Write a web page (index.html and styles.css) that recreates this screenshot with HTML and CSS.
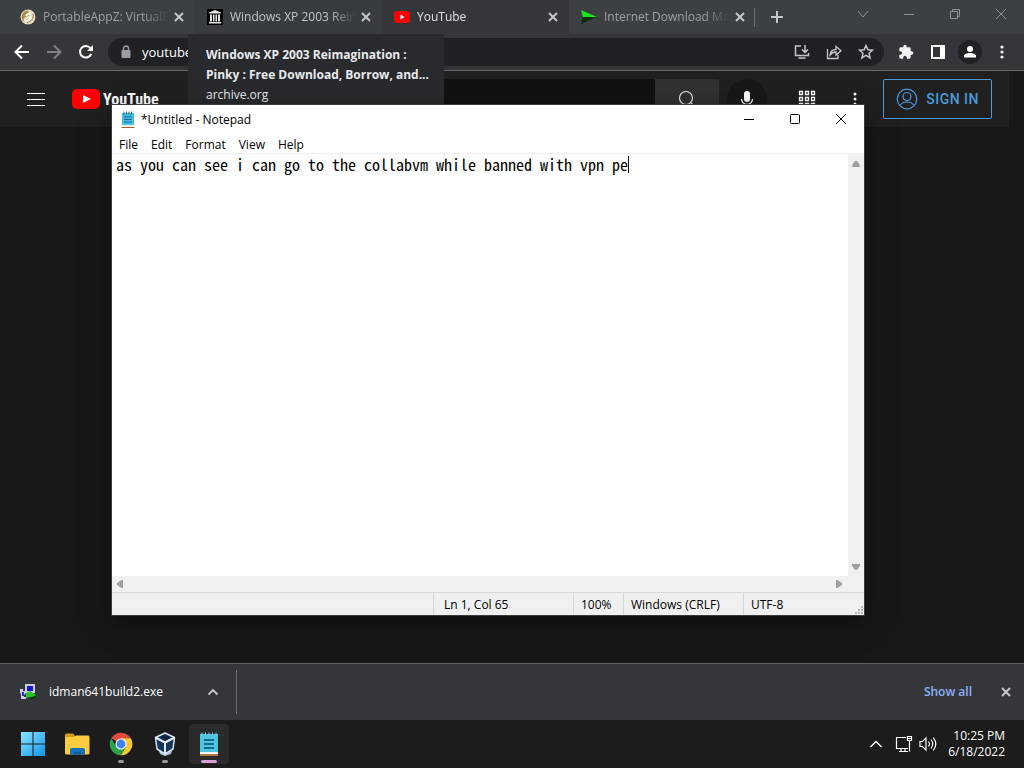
FILE: index.html
```html
<!DOCTYPE html>
<html lang="en">
<head>
    <meta charset="UTF-8">
    <meta name="viewport" content="width=device-width, initial-scale=1.0">
    <title>Desktop</title>
    <link rel="stylesheet" href="styles.css">
</head>
<body>
    <div class="browser">
        <div class="tab-strip">
            <div class="tab">
                <svg class="favicon" width="16" height="16" viewBox="0 0 16 16">
                    <circle cx="8" cy="8" r="7.5" fill="#e9dfc0"/>
                    <path d="M8 1.500a6.500 6.500 0 0 0-4 11.500c-1-4 1-5 3-5.500s3-2 1-6z" fill="#a98a4c"/>
                    <path d="M5 12c3 .5 5-1 5.500-4.500M6 7c1-2 3-3 5-2" stroke="#fff" stroke-width="2" fill="none"/>
                    <path d="M13 5c1 4-2 8-6 8.500" stroke="#8c7340" fill="none"/>
                </svg>
                <span class="tab-title">PortableAppZ: VirtualB</span>
                <button class="tab-close" aria-label="Close tab"><svg width="10" height="10" viewBox="0 0 10 10"><path d="M1 1l8 8M9 1l-8 8"/></svg></button>
            </div>
            <div class="tab hovered">
                <svg class="favicon" width="16" height="16" viewBox="0 0 16 16">
                    <rect width="16" height="16" fill="#000"/>
                    <path d="M8 1l6 2.500v1H2v-1zM3 5.500h2v7H3zM6 5.500h1.500v7H6zM8.500 5.500H10v7H8.500zM11 5.500h2v7h-2zM2 13h12v1.500H2z" fill="#e4e4e4"/>
                </svg>
                <span class="tab-title">Windows XP 2003 Rein</span>
                <button class="tab-close" aria-label="Close tab"><svg width="10" height="10" viewBox="0 0 10 10"><path d="M1 1l8 8M9 1l-8 8"/></svg></button>
            </div>
            <div class="tab active">
                <svg class="favicon" width="16" height="16" viewBox="0 0 16 16">
                    <rect y="2" width="16" height="12" rx="3" fill="#f00"/>
                    <path d="M6.500 5.500v5l4-2.500z" fill="#fff"/>
                </svg>
                <span class="tab-title">YouTube</span>
                <button class="tab-close" aria-label="Close tab"><svg width="10" height="10" viewBox="0 0 10 10"><path d="M1 1l8 8M9 1l-8 8"/></svg></button>
            </div>
            <div class="tab">
                <svg class="favicon" width="16" height="16" viewBox="0 0 16 16">
                    <path d="M0 1l16 7H2z" fill="#1be51b"/>
                    <path d="M2 8h14L0 15z" fill="#062d06"/>
                </svg>
                <span class="tab-title">Internet Download Ma</span>
                <button class="tab-close" aria-label="Close tab"><svg width="10" height="10" viewBox="0 0 10 10"><path d="M1 1l8 8M9 1l-8 8"/></svg></button>
            </div>
            <button class="new-tab" aria-label="New tab"><svg width="12" height="12" viewBox="0 0 12 12"><path d="M6 0v12M0 6h12" stroke="#c4c7ca" stroke-width="2"/></svg></button>
            <div class="window-buttons">
                <button aria-label="Search tabs"><svg width="12" height="12" viewBox="0 0 12 12"><path d="M1 3l5 6 5-6"/></svg></button>
                <button aria-label="Minimize"><svg width="12" height="12" viewBox="0 0 12 12"><path d="M1 6.500h10"/></svg></button>
                <button aria-label="Restore"><svg width="12" height="12" viewBox="0 0 12 12"><path d="M1.500 3.500h7v7h-7zM3.500 3.500v-2h7v7h-2"/></svg></button>
                <button aria-label="Close"><svg width="12" height="12" viewBox="0 0 12 12"><path d="M1 1l10 10M11 1L1 11"/></svg></button>
            </div>
        </div>

        <div class="toolbar">
            <button aria-label="Back"><svg width="16" height="16" viewBox="0 0 16 16"><path d="M15 8H2M8 1.500L1.500 8 8 14.500" fill="none" stroke="#fff" stroke-width="2"/></svg></button>
            <button aria-label="Forward"><svg width="16" height="16" viewBox="0 0 16 16"><path d="M1 8h13M8 1.500L14.500 8 8 14.500" fill="none" stroke="#7f8184" stroke-width="2"/></svg></button>
            <button aria-label="Reload"><svg width="16" height="16" viewBox="0 0 16 16"><path d="M13.200 10a5.800 5.800 0 1 1-.8-5.800" fill="none" stroke="#fff" stroke-width="2"/><path d="M15 1v6H9z" fill="#fff"/></svg></button>
            <div class="address-bar">
                <svg width="12" height="14" viewBox="0 0 12 14"><rect x="1.500" y="5" width="9" height="8" rx="1" fill="#9b9da0"/><path d="M3.500 5V3.500a2.500 2.500 0 0 1 5 0V5" fill="none" stroke="#9b9da0" stroke-width="1.500"/></svg>
                <input type="text" value="youtube.com" aria-label="Address">
                <button aria-label="Install"><svg width="16" height="16" viewBox="0 0 16 16" fill="none" stroke="#c4c7ca" stroke-width="1.500"><path d="M7 2H1.500v9.500h13V9M4.500 14h7M11 1v7M8 5.500l3 3 3-3"/></svg></button>
                <button aria-label="Share"><svg width="16" height="16" viewBox="0 0 16 16" fill="none" stroke="#c4c7ca" stroke-width="1.300"><path d="M1.500 5v9.500H12V11M4 11c.5-4 3-5.500 6-5.500V2.500l5 4.300-5 4.200V8C7.500 8 5.500 9 4 11z"/></svg></button>
                <button aria-label="Bookmark"><svg width="16" height="16" viewBox="0 0 16 16" fill="none" stroke="#c4c7ca" stroke-width="1.500"><path d="M8 1.500l1.900 4.300 4.600.4-3.500 3.100 1.100 4.600L8 11.400l-4.100 2.500L5 9.300 1.500 6.200l4.600-.4z"/></svg></button>
            </div>
            <button aria-label="Extensions"><svg width="16" height="16" viewBox="0 0 24 24"><path d="M20.500 11H19V7a2 2 0 0 0-2-2h-4V3.500a2.500 2.500 0 0 0-5 0V5H4a2 2 0 0 0-2 2v3.800h1.500a2.700 2.700 0 0 1 0 5.400H2V20a2 2 0 0 0 2 2h3.800v-1.500a2.700 2.700 0 0 1 5.400 0V22H17a2 2 0 0 0 2-2v-4h1.500a2.500 2.500 0 0 0 0-5z" fill="#f1f3f4"/></svg></button>
            <button aria-label="Side panel"><svg width="16" height="16" viewBox="0 0 16 16"><path d="M1 1h14v14H1zM3 3v10h7V3z" fill="#fff" fill-rule="evenodd"/></svg></button>
            <button class="profile" aria-label="Profile"><svg width="14" height="14" viewBox="0 0 14 14" fill="#fff"><circle cx="7" cy="4" r="3"/><path d="M1 12.500V11c0-2 3-3 6-3s6 1 6 3v1.500z"/></svg></button>
            <button aria-label="Menu"><svg width="4" height="16" viewBox="0 0 4 16" fill="#f1f3f4"><circle cx="2" cy="3" r="1.600"/><circle cx="2" cy="8" r="1.600"/><circle cx="2" cy="13" r="1.600"/></svg></button>
        </div>

        <div class="page">
            <div class="yt-header">
                <button class="yt-guide" aria-label="Guide"><svg width="18" height="14" viewBox="0 0 18 14"><path d="M0 1.500h18M0 7.500h18M0 13.500h18" stroke="#fff"/></svg></button>
                <a class="yt-logo" href="#">
                    <svg width="28" height="20" viewBox="0 0 28 20"><rect width="28" height="20" rx="5" fill="#f00"/><path d="M11 6v8l8-4z" fill="#fff"/></svg>
                    <span>YouTube</span>
                </a>
                <div class="yt-search">
                    <input type="text" aria-label="Search">
                    <button aria-label="Search"><svg width="20" height="20" viewBox="0 0 20 20" fill="none" stroke="#e8e8e8" stroke-width="1.200"><circle cx="9" cy="9" r="6.500"/><path d="M13.700 13.700L18 18"/></svg></button>
                </div>
                <button class="yt-mic" aria-label="Voice search"><svg width="16" height="20" viewBox="0 0 16 20"><rect x="5" y="2" width="6" height="11" rx="3" fill="#fff"/><path d="M2.500 10a5.500 5.500 0 0 0 11 0M8 15.500V19" fill="none" stroke="#fff" stroke-width="1.300"/></svg></button>
                <div class="yt-end">
                    <button aria-label="Apps"><svg width="18" height="18" viewBox="0 0 18 18" fill="none" stroke="#fff" stroke-width="1.300"><path d="M1.500 1.500h3v3h-3zM7.500 1.500h3v3h-3zM13.500 1.500h3v3h-3zM1.500 7.500h3v3h-3zM7.500 7.500h3v3h-3zM13.500 7.500h3v3h-3zM1.500 13.500h3v3h-3zM7.500 13.500h3v3h-3zM13.500 13.500h3v3h-3z"/></svg></button>
                    <button aria-label="Settings"><svg width="4" height="16" viewBox="0 0 4 16" fill="#fff"><circle cx="2" cy="3" r="1.500"/><circle cx="2" cy="8" r="1.500"/><circle cx="2" cy="13" r="1.500"/></svg></button>
                    <a class="sign-in" href="#">
                        <svg width="22" height="22" viewBox="0 0 22 22" fill="none" stroke="#4a9bd9" stroke-width="1.200"><circle cx="11" cy="11" r="9.800"/><circle cx="11" cy="8.500" r="4"/><path d="M4 17.500c1.500-2.500 4-3.500 7-3.500s5.500 1 7 3.500"/></svg>
                        SIGN IN
                    </a>
                </div>
            </div>
        </div>

        <div class="downloads">
            <button class="download-item">
                <svg width="16" height="16" viewBox="0 0 16 16">
                    <path d="M5 0h10v9H5z" fill="#c8ccd4"/><path d="M7 2h6v5H7z" fill="#1414d2"/>
                    <path d="M0 5h3v2h2V5h1v4L4 11v2h2v2H1v-5L0 9z" fill="#c9cdf0"/>
                    <path d="M2 8h2v4H2z" fill="#2a2ae0"/><path d="M6 9l4-2 6 4-2 2-8 1z" fill="#24c424"/>
                    <path d="M7 14l8-2v2l-3 1z" fill="#053f05"/>
                </svg>
                <span>idman641build2.exe</span>
                <svg width="12" height="8" viewBox="0 0 12 8"><path d="M1.500 6.500L6 2l4.500 4.500" fill="none" stroke="#c4c7ca" stroke-width="1.800"/></svg>
            </button>
            <div class="downloads-end">
                <a href="#">Show all</a>
                <button class="tab-close" aria-label="Close downloads"><svg width="10" height="10" viewBox="0 0 10 10"><path d="M1 1l8 8M9 1l-8 8"/></svg></button>
            </div>
        </div>

        <div class="tab-tooltip">
            <strong>Windows XP 2003 Reimagination : Pinky : Free Download, Borrow, and...</strong>
            <span>archive.org</span>
        </div>
    </div>

    <div class="notepad">
        <div class="notepad-title">
            <svg width="16" height="18" viewBox="0 0 16 18">
                <path d="M2 2h12v14H2z" fill="#45bfe0"/><path d="M2 14h12v2H2z" fill="#eee"/><path d="M1.500 16h13v1h-13z" fill="#a8622d"/>
                <path d="M4 6h8M4 8.500h8M4 11h8" stroke="#146a94"/><path d="M4 .5v3M6.500.5v3M9 .5v3M11.500.5v3" stroke="#28667c"/>
            </svg>
            <span>*Untitled - Notepad</span>
            <div class="notepad-buttons">
                <button aria-label="Minimize"><svg width="12" height="12" viewBox="0 0 12 12"><path d="M1 6.500h10"/></svg></button>
                <button aria-label="Maximize"><svg width="12" height="12" viewBox="0 0 12 12"><rect x="1.500" y="1.500" width="9" height="9" rx="1"/></svg></button>
                <button aria-label="Close"><svg width="12" height="12" viewBox="0 0 12 12"><path d="M1 1l10 10M11 1L1 11"/></svg></button>
            </div>
        </div>
        <div class="notepad-menu">
            <button>File</button>
            <button>Edit</button>
            <button>Format</button>
            <button>View</button>
            <button>Help</button>
        </div>
        <div class="editor">
            <div class="editor-text">
                <textarea aria-label="Text" spellcheck="false" wrap="off">as you can see i can go to the collabvm while banned with vpn pe</textarea>
                <i class="caret"></i>
            </div>
            <div class="scroll-v">
                <svg width="8" height="6" viewBox="0 0 8 6"><path d="M0 6V4.500L3 0h2l3 4.500V6z"/></svg>
                <svg width="8" height="6" viewBox="0 0 8 6"><path d="M0 0v1.500L3 6h2l3-4.500V0z"/></svg>
            </div>
            <div class="scroll-h">
                <svg width="6" height="8" viewBox="0 0 6 8"><path d="M6 0H4.500L0 3v2l4.500 3H6z"/></svg>
                <svg width="6" height="8" viewBox="0 0 6 8"><path d="M0 0h1.500L6 3v2L1.500 8H0z"/></svg>
            </div>
        </div>
        <div class="status-bar">
            <span></span>
            <span class="position">Ln 1, Col 65</span>
            <span>100%</span>
            <span>Windows (CRLF)</span>
            <span class="encoding">UTF-8
                <svg width="9" height="9" viewBox="0 0 9 9" fill="#b5b5b5"><path d="M6 0h2v2H6zM3 3h2v2H3zM6 3h2v2H6zM0 6h2v2H0zM3 6h2v2H3zM6 6h2v2H6z"/></svg>
            </span>
        </div>
    </div>

    <div class="taskbar">
        <button class="app" aria-label="Start">
            <svg width="24" height="24" viewBox="0 0 24 24">
                <defs><linearGradient id="win" x1="0" y1="0" x2="1" y2="1"><stop offset="0" stop-color="#8be4ff"/><stop offset="1" stop-color="#1096ea"/></linearGradient></defs>
                <path d="M0 0h11.500v11.500H0zM12.500 0H24v11.500H12.500zM0 12.500h11.500V24H0zM12.500 12.500H24V24H12.500z" fill="url(#win)"/>
            </svg>
        </button>
        <button class="app" aria-label="File Explorer">
            <svg width="26" height="24" viewBox="0 0 26 24">
                <path d="M1 3a1.500 1.500 0 0 1 1.500-1.500H9L12 5H1z" fill="#d99a14"/>
                <path d="M1 5h9l2-1.500h12A1.500 1.500 0 0 1 25.500 5v16a1.500 1.500 0 0 1-1.500 1.500H2.500A1.500 1.500 0 0 1 1 21z" fill="#fccb3f"/>
                <path d="M6 22.500V18a2 2 0 0 1 2-2h11a2 2 0 0 1 2 2v4.500z" fill="#1572b8"/>
                <path d="M10 20h7v2.500h-7z" fill="#0f5b98"/>
            </svg>
        </button>
        <button class="app running" aria-label="Chrome">
            <svg width="24" height="24" viewBox="0 0 24 24">
                <path d="M12 12L2.300 6.200A11.300 11.300 0 0 1 21.800 6.300H12z" fill="#e24a3c"/>
                <path d="M12 12V6.300h9.800A11.300 11.300 0 0 1 11.800 23.300l5.100-8.500z" fill="#fcc934"/>
                <path d="M12 12l4.900 2.800-5.100 8.500A11.300 11.300 0 0 1 2.300 6.200l4.800 8.500z" fill="#2da14c"/>
                <circle cx="12" cy="12" r="5.600" fill="#f5f5f5"/><circle cx="12" cy="12" r="4.400" fill="#3f82e8"/>
            </svg>
        </button>
        <button class="app running" aria-label="VirtualBox">
            <svg width="22" height="24" viewBox="0 0 22 24">
                <path d="M5 19l6-3 7 3-1 3-6 2-5-2z" fill="#a9bdd8"/>
                <path d="M11 1l9.500 4.500L19 17l-8 5-8-5L1.500 5.500z" fill="#16365f" stroke="#d8e4f2" stroke-width="1.500" stroke-linejoin="round"/>
                <path d="M1.500 5.500L11 10.500l9.500-5M11 10.500V22" fill="none" stroke="#e7eff9" stroke-width="2"/>
                <path d="M5 5.500l6-2.500 6 2.500-6 3z" fill="#0d2342"/>
            </svg>
        </button>
        <button class="app current" aria-label="Notepad">
            <svg width="20" height="26" viewBox="0 0 20 26">
                <path d="M1 3h18v19H1z" fill="#4fc4de"/><path d="M1 21h18v2.500H1z" fill="#f4f4f4"/><path d="M1 23.500h18V25H1z" fill="#b9742e"/>
                <path d="M5 9h10M5 13h10M5 17h10" stroke="#15688c" stroke-width="2"/>
                <path d="M3 1.500v3M6.500 1.500v3M10 1.500v3M13.500 1.500v3M17 1.500v3" stroke="#73d6ea"/>
            </svg>
        </button>
        <div class="tray">
            <button aria-label="Hidden icons"><svg width="12" height="8" viewBox="0 0 12 8"><path d="M.5 7L6 1.500 11.500 7" fill="none" stroke="#fff" stroke-width="1.400"/></svg></button>
            <button aria-label="Network"><svg width="18" height="18" viewBox="0 0 18 18" fill="none" stroke="#fff" stroke-width="1.200"><path d="M11 2.500H1.500v11H13M4 16.500h9M6 13.500v3M10 13.500v3M12.500 1.500h4v4h-4zM14.500 5.500v11M12.500 3.500h4"/></svg></button>
            <button aria-label="Volume"><svg width="18" height="16" viewBox="0 0 18 16" fill="none" stroke="#fff" stroke-width="1.200"><path d="M1 5.500h2.500L7 2v12l-3.500-3.500H1zM9.500 5.500q2 2.500 0 5M12 3.500q3.500 4.500 0 9M14.300 1.500q5 6.500 0 13"/></svg></button>
            <div class="clock">
                <div>10:25 PM</div>
                <div>6/18/2022</div>
            </div>
        </div>
    </div>
</body>
</html>
```
FILE: styles.css
```css
* {
    margin: 0;
    padding: 0;
    box-sizing: border-box;
}

body {
    font-family: 'Segoe UI', 'Open Sans', 'Noto Sans', sans-serif;
    font-size: 12px;
    line-height: 16px;
    height: 100vh;
    display: flex;
    flex-direction: column;
    overflow: hidden;
    background: #181818;
    color: #fff;
}

button {
    background: none;
    border: none;
    font: inherit;
    color: inherit;
    display: flex;
    align-items: center;
    justify-content: center;
}

input,
textarea {
    border: none;
    outline: none;
    background: none;
    font: inherit;
    color: inherit;
    min-width: 0;
}

a {
    text-decoration: none;
}

svg {
    flex-shrink: 0;
}

.browser {
    flex: 1;
    position: relative;
    display: flex;
    flex-direction: column;
    min-height: 0;
}

/* tabs */
.tab-strip {
    height: 34px;
    display: flex;
    background: #3c4043;
    padding-left: 8px;
}

.tab {
    flex: 0 1 187px;
    min-width: 0;
    display: flex;
    align-items: center;
    gap: 7px;
    padding: 0 8px 0 12px;
    color: #9da0a4;
}

.tab.hovered {
    background: #393c3f;
    color: #c4c7ca;
}

.tab.active {
    background: #35363a;
    color: #dfe1e5;
}

.tab-title {
    flex: 1;
    margin-right: -4px;
    overflow: hidden;
    white-space: nowrap;
    mask-image: linear-gradient(to right, #000 80%, transparent);
}

.tab-close {
    width: 16px;
    height: 16px;
    flex-shrink: 0;
}

.tab-close path {
    stroke: #c4c7ca;
    stroke-width: 2;
}

.new-tab {
    width: 42px;
    position: relative;
}

.new-tab::before {
    content: '';
    position: absolute;
    left: -2px;
    top: 8px;
    width: 1px;
    height: 19px;
    background: #6b6e71;
}

.window-buttons {
    margin-left: auto;
    display: flex;
    height: 28px;
}

.window-buttons button {
    width: 46px;
}

.window-buttons path {
    fill: none;
    stroke: #909396;
}

/* toolbar */
.toolbar {
    height: 37px;
    display: flex;
    align-items: center;
    padding: 0 6px;
    background: #35363a;
    border-bottom: 1px solid #6a6a6a;
}

.toolbar button {
    width: 32px;
    height: 28px;
}

.toolbar .profile {
    width: 24px;
    height: 24px;
    margin: 0 4px;
    border-radius: 50%;
    background: #202124;
}

.address-bar {
    flex: 1;
    height: 28px;
    display: flex;
    align-items: center;
    margin: 0 6px;
    padding: 0 2px 0 12px;
    border-radius: 14px;
    background: #202124;
    font-size: 13px;
}

.address-bar input {
    flex: 1;
    margin-left: 10px;
}

/* page */
.page {
    flex: 1;
    padding-right: 15px;
}

.yt-header {
    height: 56px;
    display: flex;
    align-items: center;
    padding: 0 17px 0 27px;
    background: #202020;
}

.yt-logo {
    display: flex;
    align-items: center;
    gap: 3px;
    width: 90px;
    margin-left: 27px;
    color: #fff;
    font: bold 16px 'Roboto Condensed', 'Roboto', sans-serif;
}

.yt-search {
    flex: 1;
    display: flex;
    height: 40px;
    margin-left: 92px;
}

.yt-search input {
    flex: 1;
    background: #121212;
}

.yt-search button {
    width: 64px;
    background: #313131;
}

.yt-mic {
    width: 40px;
    height: 40px;
    margin-left: 8px;
    border-radius: 50%;
    background: #181818;
}

.yt-end {
    display: flex;
    align-items: center;
    margin-left: 16px;
}

.yt-end button {
    width: 48px;
    height: 40px;
}

.sign-in {
    display: flex;
    align-items: center;
    gap: 8px;
    height: 40px;
    margin-left: 4px;
    padding: 0 12px;
    border: 1px solid #4a9bd9;
    border-radius: 2px;
    color: #4a9bd9;
    font: 500 14px 'Roboto', sans-serif;
    letter-spacing: 0.5px;
}

/* download bar */
.downloads {
    height: 57px;
    display: flex;
    align-items: center;
    justify-content: space-between;
    background: #35363a;
    border-top: 1px solid #606164;
}

.download-item {
    width: 237px;
    height: 44px;
    justify-content: flex-start;
    gap: 13px;
    padding: 0 17px 0 20px;
    border-right: 1px solid #6b6e71;
}

.download-item span {
    flex: 1;
    text-align: left;
}

.downloads-end {
    display: flex;
    align-items: center;
    gap: 26px;
    padding-right: 10px;
}

.downloads-end a {
    color: #8ab0f8;
    font-weight: 600;
}

/* tooltip under the hovered tab */
.tab-tooltip {
    position: absolute;
    left: 188px;
    top: 34px;
    width: 256px;
    padding: 11px 12px 11px 18px;
    background: #292a2d;
    color: #e8eaed;
    line-height: 20px;
}

.tab-tooltip strong,
.tab-tooltip span {
    display: block;
}

.tab-tooltip strong {
    font-weight: 700;
}

/* notepad window */
.notepad {
    position: absolute;
    left: 112px;
    top: 105px;
    width: 752px;
    height: 510px;
    display: flex;
    flex-direction: column;
    background: #fff;
    color: #000;
    box-shadow: 0 0 0 1px #3a3a3a, 0 8px 24px rgba(0,0,0,0.5);
}

.notepad-title {
    height: 29px;
    display: flex;
    align-items: center;
    gap: 5px;
    padding-left: 8px;
}

.notepad-buttons {
    display: flex;
    height: 28px;
    align-self: flex-start;
    margin-left: auto;
}

.notepad-buttons button {
    width: 46px;
}

.notepad-buttons svg {
    fill: none;
    stroke: #000;
}

.notepad-menu {
    height: 20px;
    display: flex;
    gap: 13px;
    padding: 2px 7px 0;
    border-bottom: 1px solid #f0f0f0;
}

.editor {
    flex: 1;
    display: grid;
    grid-template-columns: 1fr 16px;
    grid-template-rows: 1fr 16px;
    background: #f0f0f0;
}

.editor-text {
    position: relative;
    display: flex;
    background: #fff;
    font: 16px/18px 'Noto Sans Mono CJK SC', 'DejaVu Sans Mono', monospace;
}

.editor-text textarea {
    flex: 1;
    padding: 1px 4px;
    resize: none;
    overflow: hidden;
}

/* 64 characters in */
.caret {
    position: absolute;
    left: calc(4px + 64ch);
    top: 2px;
    width: 1px;
    height: 17px;
    background: #000;
}

.scroll-v,
.scroll-h {
    display: flex;
    align-items: center;
    justify-content: space-between;
    fill: #a0a0a0;
}

.scroll-v {
    flex-direction: column;
    padding: 7px 0 6px;
}

.scroll-h {
    padding: 0 6px 0 5px;
}

.status-bar {
    height: 23px;
    display: grid;
    grid-template-columns: 1fr 140px 50px 120px 121px;
    background: #f0f0f0;
    border-top: 1px solid #d7d7d7;
    line-height: 24px;
}

.status-bar span + span {
    height: 22px;
    padding-left: 7px;
    border-left: 1px solid #d7d7d7;
}

.status-bar .position {
    padding-left: 10px;
}

.status-bar .encoding {
    display: flex;
    justify-content: space-between;
}

.encoding svg {
    align-self: flex-end;
}

/* taskbar */
.taskbar {
    height: 48px;
    display: flex;
    align-items: center;
    gap: 4px;
    padding-left: 13px;
    background: #1c1c1c;
}

.app {
    position: relative;
    width: 40px;
    height: 40px;
    border-radius: 4px;
}

.app.current {
    background: #2b2b2b;
}

.app.running::after,
.app.current::after {
    content: '';
    position: absolute;
    bottom: 1px;
    width: 6px;
    height: 3px;
    border-radius: 2px;
    background: #9a9a9a;
}

.app.current::after {
    width: 16px;
    background: #d5a0d8;
}

.tray {
    display: flex;
    align-items: center;
    gap: 6px;
    margin-left: auto;
    padding-right: 19px;
}

.tray button:first-child {
    margin-right: 7px;
}

.clock {
    margin-left: 5px;
    text-align: right;
}
```
